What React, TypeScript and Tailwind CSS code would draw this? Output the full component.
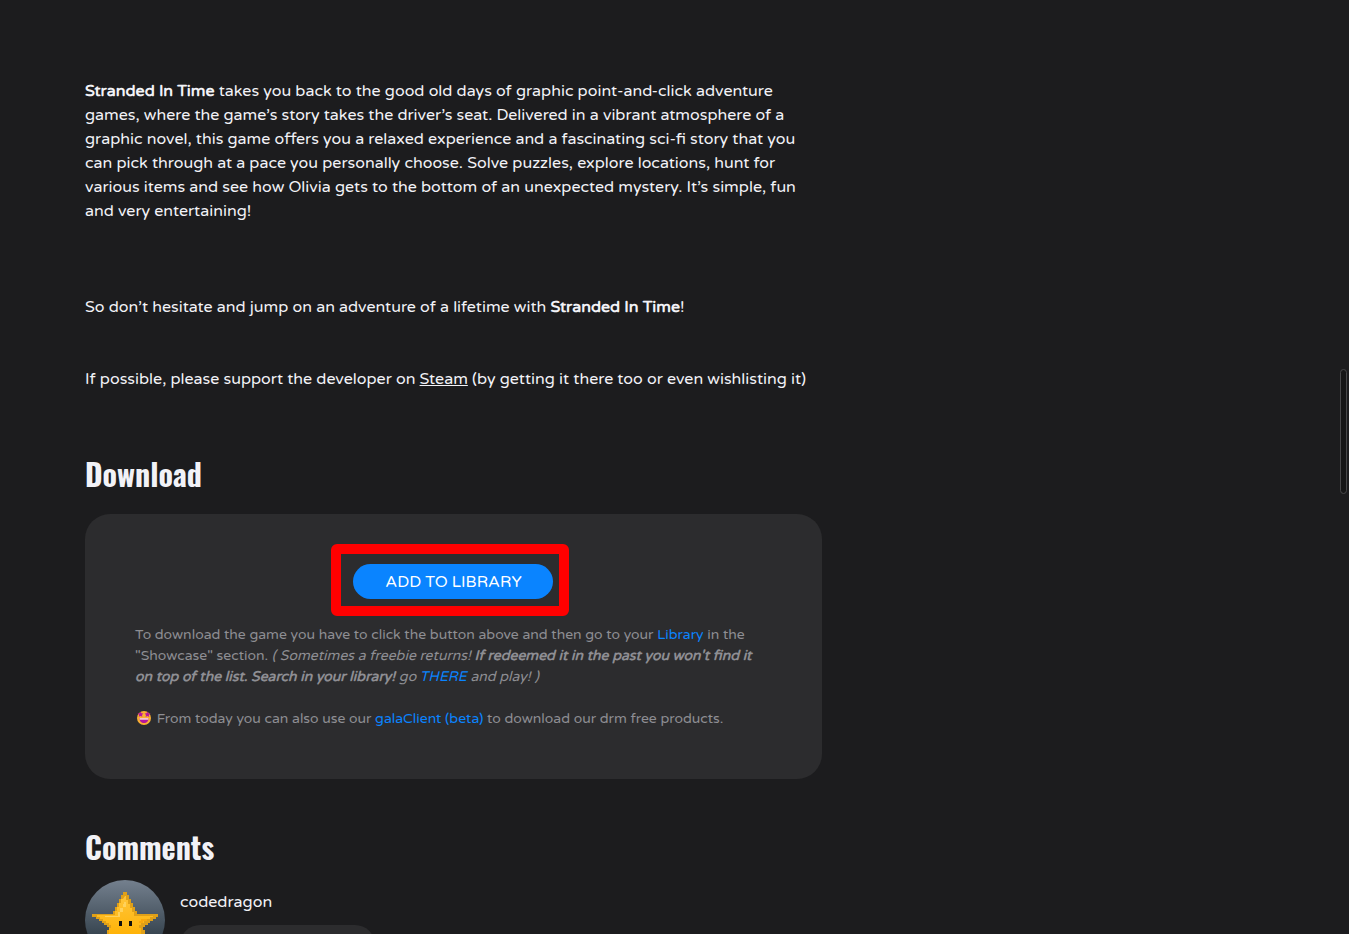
import type { ReactNode } from 'react';

function SectionTitle({ children }: { children: ReactNode }) {
  return (
    <h2 className="font-['Oswald','Roboto_Condensed',sans-serif] text-[30px] leading-[40px] font-bold text-[#f2f2f7]">
      {children}
    </h2>
  );
}

function InlineLink({ href, children }: { href: string; children: ReactNode }) {
  return <a href={href} className="text-[#0a84ff] hover:underline">{children}</a>;
}

function StarStruck() {
  return (
    <svg viewBox="0 0 14 14" className="inline-block w-[14px] h-[14px] mx-0.5 align-[-2px]" aria-label="star-struck" role="img">
      <circle cx="7" cy="7" r="7" fill="#fbb034" />
      <path d="M3.6 0.4l.9 1.900 1.900.2-1.400 1.400.4 1.900-1.800-.9-1.800.9.3-2L.4 2.600l2.300-.4z" fill="#b5179e" />
      <path d="M10.400 .4l.9 1.800 2.300.4-1.700 1.300.3 2-1.800-.9-1.800.9.4-1.900L7.600 2.500l1.900-.2z" fill="#b5179e" />
      <path d="M2.600 7h8.800c.3 3.200-1.700 5-4.400 5s-4.700-1.800-4.400-5z" fill="#b5179e" />
      <path d="M2.600 7h8.800v1.800H2.600z" fill="#f3c3cf" />
    </svg>
  );
}

function StarAvatar() {
  return (
    <svg viewBox="0 0 80 80" className="size-20 shrink-0 rounded-full" aria-hidden="true">
      <defs>
        <linearGradient id="sky" x1="0" y1="0" x2="0" y2="1">
          <stop offset="0" stopColor="#74808e" />
          <stop offset="1" stopColor="#1c2a34" />
        </linearGradient>
        <linearGradient id="gold" x1="0" y1="0" x2="0" y2="1">
          <stop offset="0" stopColor="#ffc53a" />
          <stop offset="1" stopColor="#ffb000" />
        </linearGradient>
      </defs>
      <rect width="80" height="80" fill="url(#sky)" />
      {/* 2px pixel-art star */}
      <g>
        <path
          d="M39 12h3v3h2v4h2v4h2v4h2v4h2v3h21v3h-2v2h-3v2h-3v2h-2v2h-3v2h-2v3h2v6h2v8h-6v-2h-4v-2h-4v-2H34v2h-4v2h-4v2h-6v-8h2v-6h2v-3h-2v-2h-3v-2h-2v-2h-3v-2h-3v-2H7v-3h21v-3h2v-4h2v-4h2v-4h2v-4h2v-3z"
          fill="#e0a018"
        />
        <path
          d="M40 16h1v4h2v4h2v4h2v4h2v4h19v1h-3v2h-3v2h-3v2h-3v2h-2v3h2v6h2v6h-4v-2h-4v-2h-4v-2H34v2h-4v2h-4v2h-4v-6h2v-6h2v-3h-2v-2h-3v-2h-3v-2h-3v-2h-3v-2h18v-4h2v-4h2v-4h2v-4h2z"
          fill="url(#gold)"
        />
        <path d="M39 22h2v5h-3v5h-3v5H20v-1h13v-4h2v-4h3v-4h1z" fill="#ffd25c" />
        <path d="M56 39h6v2h-4v2h-4v-2h2z" fill="#f9a80c" />
        <path d="M34 41h3v5h-3zM44 41h3v5h-3z" fill="#101010" />
      </g>
    </svg>
  );
}

export default function App() {
  return (
    <div className="h-screen overflow-hidden bg-[#1c1c1e] px-[85px] font-['Varela_Round','Varela','Noto_Sans',sans-serif] text-base text-[#f2f2f7]">
      <main className="mx-auto max-w-[1179px] pt-[79px]">
        <div className="w-5/8">
          <article className="flex flex-col">
            <p className="pr-3">
              <strong>Stranded In Time</strong> takes you back to the good old days of graphic point-and-click adventure
              games, where the game’s story takes the driver’s seat. Delivered in a vibrant atmosphere of a
              graphic novel, this game offers you a relaxed experience and a fascinating sci-fi story that you
              can pick through at a pace you personally choose. Solve puzzles, explore locations, hunt for
              various items and see how Olivia gets to the bottom of an unexpected mystery. It’s simple, fun
              and very entertaining!
            </p>
            <p className="mt-18">
              So don’t hesitate and jump on an adventure of a lifetime with <strong>Stranded In Time</strong>!
            </p>
            <p className="mt-12">
              If possible, please support the developer on <a href="#steam" className="underline">Steam</a> (by getting it there too or even wishlisting it)
            </p>
          </article>

          <section className="mt-[63px]">
            <SectionTitle>Download</SectionTitle>
            <div className="mt-5 rounded-[25px] bg-[#2c2c2e] p-[50px] text-sm leading-[21px] text-[#8e8e93]">
              <div className="relative mx-auto w-[200px]">
                <button className="block h-[35px] w-full rounded-full bg-[#0a84ff] text-base text-white">ADD TO LIBRARY</button>
                {/* Highlight around the button */}
                <div className="pointer-events-none absolute -top-5 -bottom-[17px] -left-[22px] -right-4 rounded-md border-10 border-[#ff0000]" />
              </div>
              <p className="mt-[25px]">
                To download the game you have to click the button above and then go to your <InlineLink href="#library">Library</InlineLink> in the
                "Showcase" section. <em>( Sometimes a freebie returns! <strong>If redeemed it in the past you won't find it
                <br />
                on top of the list. Search in your library!</strong> go <InlineLink href="#there">THERE</InlineLink> and play! )</em>
              </p>
              <p className="mt-[21px]">
                <StarStruck /> From today you can also use our <InlineLink href="#client">galaClient (beta)</InlineLink> to download our drm free products.
              </p>
            </div>
          </section>

          <section className="mt-12">
            <SectionTitle>Comments</SectionTitle>
            <div className="mt-[13px] flex gap-[15px]">
              <StarAvatar />
              <div>
                <a href="#codedragon" className="mt-[10px] block">codedragon</a>
                <div className="mt-[11px] h-20 w-[195px] rounded-[20px] bg-[#2c2c2e]" />
              </div>
            </div>
          </section>
        </div>
      </main>

      {/* Scroll thumb */}
      <div className="fixed right-0.5 top-[369px] h-[125px] w-[7px] rounded-full border border-[#48484a] bg-[#161617]" />
    </div>
  );
}
